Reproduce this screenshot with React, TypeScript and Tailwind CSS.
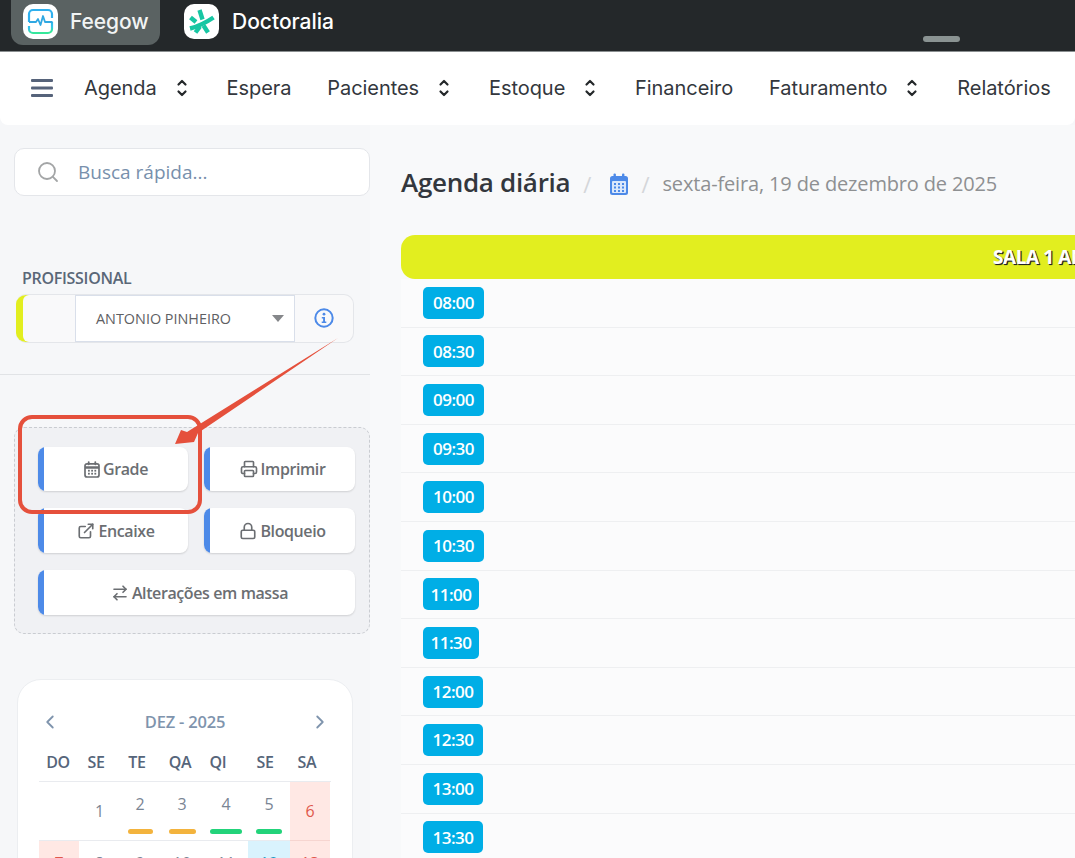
import React from "react";
import { Search, Printer, ExternalLink, Lock, ArrowRightLeft, ChevronLeft, ChevronRight } from "lucide-react";

const FeegowLogo = () => (
  <svg width="35" height="35" viewBox="0 0 35 35" fill="none">
    <defs>
      <linearGradient id="fg" x1="0" y1="0" x2="0.2" y2="1">
        <stop offset="0" stopColor="#2fb0ee" />
        <stop offset="0.6" stopColor="#35c4ea" />
        <stop offset="1" stopColor="#36e89a" />
      </linearGradient>
    </defs>
    <path d="M6 18V10a4 4 0 0 1 4-4h15a4 4 0 0 1 4 4v4" stroke="#2fb0ee" strokeWidth="2.2" />
    <path d="M29 18v7a4 4 0 0 1-4 4H10a4 4 0 0 1-4-4v-3" stroke="url(#fg)" strokeWidth="2.2" />
    <path d="M6 18h7l2-3 2.5 6 2.5-9 2 6h7.5" stroke="#2fa8e2" strokeWidth="1.8" strokeLinejoin="round" />
  </svg>
);

const DoctoraliaLogo = () => (
  <svg width="35" height="35" viewBox="0 0 35 35" fill="none" stroke="#17c6a3" strokeWidth="4.4">
    <path d="M15.5 6l3 9.5" />
    <path d="M6 24.5c8-2 16-6 23.5-11" />
    <path d="M6.5 13.5l5.5 4.5" />
    <path d="M11.5 28.5l4.5-6" />
    <path d="M19.5 21.5l4.5 7" />
  </svg>
);

const UpDown = () => (
  <svg width="18" height="20" viewBox="0 0 18 20" fill="none" stroke="#24282a" strokeWidth="2.2" strokeLinecap="round" strokeLinejoin="round">
    <path d="M5.5 6.5L9 3l3.5 3.5" />
    <path d="M5.5 13.5L9 17l3.5-3.5" />
  </svg>
);

const Hamburger = () => (
  <svg width="22" height="18" viewBox="0 0 22 18" fill="#56637a">
    <rect x="0" y="0" width="22" height="3" rx="1" />
    <rect x="0" y="7.5" width="22" height="3" rx="1" />
    <rect x="0" y="15" width="22" height="3" rx="1" />
  </svg>
);

const InfoIcon = () => (
  <svg width="20" height="20" viewBox="0 0 20 20" fill="none">
    <circle cx="10" cy="10" r="8.7" stroke="#4d8ae8" strokeWidth="2" />
    <circle cx="10" cy="6.2" r="1.4" fill="#4d8ae8" />
    <path d="M7.8 9h3.2v4.4h1.3v1.6H7.7v-1.6h1.4v-2.8H7.8z" fill="#4d8ae8" />
  </svg>
);

const CalendarFilled = () => (
  <svg width="20" height="23" viewBox="0 0 20 23" fill="none">
    <rect x="1" y="3" width="18" height="19" rx="2.5" fill="#4d8ae8" />
    <rect x="3" y="8" width="14" height="12" rx="1" fill="#dbe8fb" />
    <rect x="4.5" y="0.5" width="2.4" height="5" rx="1" fill="#4d8ae8" />
    <rect x="13" y="0.5" width="2.4" height="5" rx="1" fill="#4d8ae8" />
    <g fill="#4d8ae8">
      {[5, 9, 13].map((x) => [10, 13.5, 17].map((y) => <rect key={x + "-" + y} x={x} y={y} width="2" height="2" />))}
    </g>
  </svg>
);

const CalendarRegular = () => (
  <svg width="16" height="17" viewBox="0 0 16 17" fill="none">
    <rect x="1" y="2.8" width="14" height="13.2" rx="2" stroke="currentColor" strokeWidth="1.7" />
    <path d="M1 6.5h14" stroke="currentColor" strokeWidth="2.4" />
    <rect x="3.8" y="0.3" width="1.8" height="4" rx="0.8" fill="currentColor" />
    <rect x="10.4" y="0.3" width="1.8" height="4" rx="0.8" fill="currentColor" />
    <g fill="currentColor">
      {[4, 7.2, 10.4].map((x) => [8.8, 11.8].map((y) => <rect key={x + "-" + y} x={x} y={y} width="1.8" height="1.8" />))}
    </g>
  </svg>
);

const navItems: [string, boolean][] = [
  ["Agenda", true],
  ["Espera", false],
  ["Pacientes", true],
  ["Estoque", true],
  ["Financeiro", false],
  ["Faturamento", true],
  ["Relatórios", false],
];

const times = ["08:00", "08:30", "09:00", "09:30", "10:00", "10:30", "11:00", "11:30", "12:00", "12:30", "13:00", "13:30"];
const badgeWidths = ["w-[61px]", "w-[61px]", "w-[61px]", "w-[61px]", "w-[61px]", "w-[61px]", "w-[56px]", "w-[56px]", "w-[60px]", "w-[60px]", "w-[60px]", "w-[60px]"];

function ActionButton({ icon, label, className }: { icon: React.ReactNode; label: string; className?: string }) {
  return (
    <button className={"flex items-stretch bg-white rounded-lg overflow-hidden shadow-[0_1px_2px_rgba(0,0,0,0.14)] text-[16px] font-semibold text-[#6b6e72] tracking-[-0.4px] " + (className ?? "")}>
      <span className="w-[6px] bg-[#4d8ae8]" />
      <span className="flex-1 flex items-center justify-center gap-[3px]">
        {icon}
        <span>{label}</span>
      </span>
    </button>
  );
}

const cols = "grid grid-cols-[40px_41px_40px_44px_44px_42px_40px]";

function Day({ n, bar, tone, top }: { n: string; bar?: string; tone?: string; top?: boolean }) {
  const bg = tone === "red" ? "bg-[#ffe8e4] text-[#e0584c] border-[#f6d5d0]" : tone === "blue" ? "bg-[#d9f3fd] text-[#1f9cc4] border-[#e9ebef]" : "text-[#7a8594] border-[#e9ebef]";
  return (
    <div className={"flex flex-col items-center border-b text-[16px] h-[59px] " + bg + (bar || top ? " pt-[9px]" : " justify-center")}>
      <span className="leading-[26px]">{n}</span>
      {bar && <span className={"mt-[12px] h-[5px] rounded-full " + bar} />}
    </div>
  );
}

export default function App() {
  return (
    <div className="w-[1075px] h-[858px] overflow-hidden relative bg-[#f6f7f9] font-['Inter',sans-serif]">
      {/* Top bar */}
      <div className="h-[52px] bg-[#24282a] border-b border-[#8a8f90] flex items-start relative">
        <div className="ml-[11px] h-[45px] w-[149px] bg-[#5a6262] rounded-b-xl flex items-center pl-[12px] gap-[12px] pb-[2px]">
          <div className="w-[35px] h-[35px] bg-white rounded-[10px] overflow-hidden"><FeegowLogo /></div>
          <span className="text-[21px] font-medium text-[#f2f4f4] tracking-[-0.1px]">Feegow</span>
        </div>
        <div className="ml-[24px] h-[45px] flex items-center gap-[13px] pb-[2px]">
          <div className="w-[35px] h-[35px] bg-white rounded-[10px] overflow-hidden"><DoctoraliaLogo /></div>
          <span className="text-[21px] font-medium text-white">Doctoralia</span>
        </div>
        <div className="absolute left-[923px] top-[36px] w-[37px] h-[6px] rounded-full bg-[#8a9392]" />
      </div>

      {/* Nav */}
      <div className="h-[73px] bg-white rounded-b-lg flex items-center pl-[31px] pb-[2px]">
        <Hamburger />
        <div className="flex items-center ml-[31px] gap-[35.8px] text-[20px] text-[#33373d] tracking-[-0.05px] whitespace-nowrap">
          {navItems.map(([name, chevron]) => (
            <div key={name} className="flex items-center gap-[16px]">
              <span>{name}</span>
              {chevron && <UpDown />}
            </div>
          ))}
        </div>
      </div>

      <div className="flex font-['Open_Sans',sans-serif]">
        {/* Sidebar */}
        <aside className="w-[370px] shrink-0 flex flex-col">
          <div className="mt-[23px] ml-[14px] w-[356px] h-[48px] bg-white rounded-[10px] border border-[#e4e6ea] flex items-center pl-[21px] gap-[18px]">
            <Search size={24} strokeWidth={1.8} className="text-[#a3a5a6]" />
            <span className="text-[19px] text-[#7890ac]">Busca rápida...</span>
          </div>

          <div className="mt-[71px] ml-[22px] text-[16px] font-semibold text-[#5a6778] leading-[22px] tracking-[-0.3px]">PROFISSIONAL</div>
          <div className="mt-[5px] ml-[16px] w-[338px] h-[49px] flex rounded-[10px] border border-l-0 border-[#e4e6ea] bg-[#f9f9fa] overflow-hidden">
            <div className="w-[59px] bg-[#e2ee1f] pl-[7px]">
              <div className="h-full bg-[#f9f9fa] rounded-l-[6px]" />
            </div>
            <div className="w-[220px] bg-white border border-[#d9dfea] flex items-center pl-[20px] pr-[10px] justify-between">
              <span className="text-[14.4px] text-[#5e6063]">ANTONIO PINHEIRO</span>
              <span className="w-0 h-0 border-x-[6px] border-x-transparent border-t-[7px] border-t-[#85878a]" />
            </div>
            <div className="flex-1 flex items-center justify-center pb-[2px]">
              <InfoIcon />
            </div>
          </div>

          <div className="mt-[31px] h-px bg-[#e1e3e6]" />

          <div className="mt-[52px] ml-[14px] w-[356px] h-[207px] rounded-[10px] border border-dashed border-[#c9ccd1] bg-[#f0f1f4] pl-[23px] pr-[14px] pt-[18px]">
            <div className="grid grid-cols-[150px_151px] gap-x-[16px] grid-rows-[44px_45px_45px] gap-y-[17px] mt-px">
              <ActionButton label="Grade" icon={<CalendarRegular />} />
              <ActionButton label="Imprimir" icon={<Printer size={18} strokeWidth={2.2} />} />
              <ActionButton label="Encaixe" icon={<ExternalLink size={18} strokeWidth={2.2} />} />
              <ActionButton label="Bloqueio" icon={<Lock size={18} strokeWidth={2.2} />} />
              <ActionButton label="Alterações em massa" className="col-span-2" icon={<ArrowRightLeft size={18} strokeWidth={2.2} />} />
            </div>
          </div>

          <div className="mt-[45px] ml-[17px] w-[336px] h-[300px] bg-white rounded-[24px] border border-[#eceef1] px-[21px] pt-[28px]">
            <div className="flex items-center justify-between px-[3px] h-[28px] text-[#7f94ad]">
              <ChevronLeft size={22} strokeWidth={2} className="-ml-[3px]" />
              <span className="text-[16.5px] font-semibold tracking-[-0.2px]">DEZ - 2025</span>
              <ChevronRight size={22} strokeWidth={2} className="-mr-[3px]" />
            </div>
            <div className="grid grid-cols-[38px_38px_44px_42px_34px_60px_24px] mt-[12px] h-[34px] pb-[5px] items-center justify-items-center text-[16px] font-semibold text-[#56657a] tracking-[-0.3px] border-b border-[#e9ebef] whitespace-nowrap">
              {["DO", "SE", "TE", "QA", "QI", "SE", "SA"].map((d, i) => <span key={i}>{d}</span>)}
            </div>
            <div className={cols}>
              <Day n="" />
              <Day n="1" />
              <Day n="2" bar="bg-[#f3b33d] w-[25px]" />
              <Day n="3" bar="bg-[#f3b33d] w-[27px]" />
              <Day n="4" bar="bg-[#22d37a] w-[32px]" />
              <Day n="5" bar="bg-[#22d37a] w-[26px]" />
              <Day n="6" tone="red" />
              <Day n="7" tone="red" top />
              <Day n="8" top />
              <Day n="9" top />
              <Day n="10" top />
              <Day n="11" top />
              <Day n="12" tone="blue" top />
              <Day n="13" tone="red" top />
            </div>
          </div>
        </aside>

        {/* Main */}
        <main className="flex-1 min-w-0 bg-[#f8f9fa] pl-[31px]">
          <div className="mt-[39px] h-[40px] flex items-center whitespace-nowrap">
            <span className="text-[26px] font-semibold text-[#33373d] tracking-[-0.3px] -mt-[3px]">Agenda diária</span>
            <span className="ml-[13px] text-[22px] text-[#d4d6d9]">/</span>
            <span className="ml-[18px]"><CalendarFilled /></span>
            <span className="ml-[12px] text-[22px] text-[#d4d6d9]">/</span>
            <span className="ml-[13px] text-[20px] text-[#8e9092] tracking-[-0.15px]">sexta-feira, 19 de dezembro de 2025</span>
          </div>

          <div className="mt-[31px] w-[1000px] h-[44px] bg-[#e2ee1f] rounded-l-[14px] flex items-center pl-[592px] whitespace-nowrap">
            <span className="text-[19px] font-bold text-white tracking-[-0.4px] [text-shadow:1px_1px_1px_#222,1px_1px_0_#333]">SALA 1 ANTONIO PINHEIRO</span>
          </div>

          {times.map((t, i) => (
            <div key={t} className="h-[48.6px] bg-[#fbfbfc] border-b border-[#eeeff1] flex items-center pl-[22px]">
              <span className={"h-[32px] rounded-[5px] bg-[#00aee6] text-white text-[17px] font-semibold tracking-[-0.5px] flex items-center justify-center " + badgeWidths[i]}>
                {t}
              </span>
            </div>
          ))}
        </main>
      </div>

      {/* Annotations */}
      <div className="absolute left-[18px] top-[415px] w-[184px] h-[99px] rounded-[14px] border-[4px] border-[#e5503c] pointer-events-none" />
      <svg className="absolute left-0 top-0 pointer-events-none" width="1075" height="858">
        <polygon points="338,338 198,433 194,442 175,444 181,430 187,432" fill="#e5503c" />
      </svg>
    </div>
  );
}
